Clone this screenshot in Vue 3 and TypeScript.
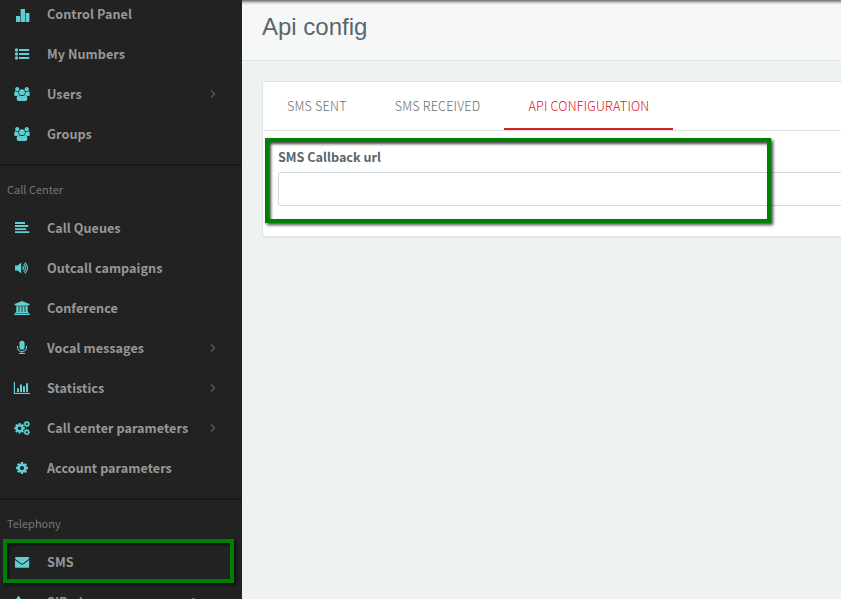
<script setup lang="ts">
interface NavItem {
  label: string
  icon: string
  sub?: boolean
  marked?: boolean
}
interface NavSection {
  title?: string
  items: NavItem[]
}

const sections: NavSection[] = [
  {
    items: [
      { label: 'Control Panel', icon: 'bars' },
      { label: 'My Numbers', icon: 'list' },
      { label: 'Users', icon: 'group', sub: true },
      { label: 'Groups', icon: 'group' },
    ],
  },
  {
    title: 'Call Center',
    items: [
      { label: 'Call Queues', icon: 'align' },
      { label: 'Outcall campaigns', icon: 'volume' },
      { label: 'Conference', icon: 'bank' },
      { label: 'Vocal messages', icon: 'mic', sub: true },
      { label: 'Statistics', icon: 'chart', sub: true },
      { label: 'Call center parameters', icon: 'cogs', sub: true },
      { label: 'Account parameters', icon: 'cog' },
    ],
  },
  {
    title: 'Telephony',
    items: [
      { label: 'SMS', icon: 'mail', marked: true },
      { label: 'SIP phone management', icon: 'phone' },
    ],
  },
]

const tabs = ['SMS SENT', 'SMS RECEIVED', 'API CONFIGURATION']
const activeTab = 2

const cog =
  'M1152 896q0-106-75-181t-181-75-181 75-75 181 75 181 181 75 181-75 75-181zm512-109v222q0 12-8 23t-20 13l-185 28q-19 54-39 91 35 50 107 138 10 12 10 25t-9 23q-27 37-99 108t-94 71q-12 0-26-9l-138-108q-44 23-91 38-16 136-29 186-7 28-36 28h-222q-14 0-24.5-8.5t-11.5-21.5l-28-184q-49-16-90-37l-141 107q-10 9-25 9-14 0-25-11-126-114-165-168-7-10-7-23 0-12 8-23 15-21 51-66.5t54-70.5q-27-50-41-99l-183-27q-13-2-21-12.5t-8-23.5v-222q0-12 8-23t19-13l186-28q14-46 39-92-40-57-107-138-10-12-10-24 0-10 9-23 26-36 98.5-107.5t94.5-71.5q13 0 26 10l138 107q44-23 91-38 16-136 29-186 7-28 36-28h222q14 0 24.5 8.5t11.5 21.5l28 184q49 16 90 37l142-107q9-9 24-9 13 0 25 10 129 119 165 170 7 8 7 22 0 12-8 23-15 21-51 66.5t-54 70.5q26 50 41 98l183 28q13 2 21 12.5t8 23.5z'
</script>

<template>
  <div class="app">
    <nav class="sidebar">
      <section v-for="(section, s) in sections" :key="s" class="section">
        <h2 v-if="section.title" class="section-title">{{ section.title }}</h2>
        <a v-for="item in section.items" :key="item.label" class="item" :class="{ marked: item.marked }">
          <svg class="icon" width="18" height="16" viewBox="0 0 18 16">
            <path v-if="item.icon === 'bars'" d="M3 10h4v6H3zM7.600 3H12v13H7.600zM12.600 7h3.800v9h-3.800z" />
            <template v-else-if="item.icon === 'list'">
              <path d="M6 3h10.200v2H6zM6 7h10.200v2H6zM6 11h10.200v2H6z" />
              <circle cx="3.500" cy="4" r="1.700" /><circle cx="3.500" cy="8" r="1.700" /><circle cx="3.500" cy="12" r="1.700" />
            </template>
            <template v-else-if="item.icon === 'group'">
              <circle cx="4.200" cy="3.200" r="2.100" /><circle cx="13.800" cy="3.200" r="2.100" />
              <path d="M1.200 8.200c0-2 .5-3 1.200-3 1 .7 2.200.8 3 .5 0 1.500.4 2.500 1.200 3.300-1.100 0-2 .3-2.700 1H2.700C1.700 10 1.200 9.300 1.200 8.200zM16.800 8.200c0-2-.5-3-1.200-3-1 .7-2.200.8-3 .5 0 1.500-.4 2.500-1.200 3.300 1.100 0 2 .3 2.700 1h1.200c1 0 1.500-.7 1.500-1.800z" />
              <circle cx="9" cy="6.200" r="2.900" />
              <path d="M3.700 12.800c0-2.500.9-3.700 2.300-3.700.8.600 1.800 1 3 1s2.200-.4 3-1c1.400 0 2.300 1.200 2.300 3.700 0 1.400-.9 2.300-2.200 2.300H5.900c-1.300 0-2.200-.9-2.200-2.300z" />
            </template>
            <path v-else-if="item.icon === 'align'" d="M2 2h10v2H2zM2 5h13.200v2H2zM2 8.200h11.200V10H2zM2 11.200h14.200V13H2z" />
            <template v-else-if="item.icon === 'volume'">
              <path d="M2 5.500h2.700L8.200 2.500v11L4.700 10.500H2z" />
              <path class="stroke" d="M9.700 6.200q1.700 1.800 0 3.600M10.700 4.200q3.600 3.800 0 7.600M11.700 2.500q5.600 5.500 0 11" />
            </template>
            <path v-else-if="item.icon === 'bank'" d="M9 1l7.500 3v1H15.500v.8h-13V5H1.500V4zM3.300 6.300h2.300V12h.8V6.300h2.200V12h.8V6.300h2.200V12h.8V6.300h2.300V12h.8v1h-13v-1h.8zM1.200 13.500h15.600V15H1.200z" />
            <template v-else-if="item.icon === 'mic'">
              <rect x="6.400" y=".7" width="5.200" height="9" rx="2.500" />
              <path class="stroke" d="M4.500 6v1.500a4.500 4 0 0 0 9 0V6M9 11.500v2M6 13.500h6" />
            </template>
            <path v-else-if="item.icon === 'chart'" d="M.8 2H2v11h15v1.100H.8zM4 8.300h2v3.900H4zM7 4.500h2v7.700H7zM10 6.300h2v5.900h-2zM13 3.300h2v8.900h-2z" />
            <template v-else-if="item.icon === 'cogs'">
              <path transform="translate(.38 2.100) scale(.0069)" :d="cog" />
              <path transform="translate(10.100 .4) scale(.0041)" :d="cog" />
              <path transform="translate(10.100 8.500) scale(.0041)" :d="cog" />
            </template>
            <path v-else-if="item.icon === 'cog'" transform="translate(2 1) scale(.0078125)" :d="cog" />
            <path v-else-if="item.icon === 'mail'" d="M2 4q0-1 1-1h12.200q1 0 1 1v.5q-.3.600-1 1.100L9.900 9.400q-.8.600-1.600 0L3 5.600Q2 5 2 4zM2 6l5.500 4.100q1.600 1.100 3.200 0L16.200 6v6.700q0 1-1 1H3q-1 0-1-1z" />
            <path v-else d="M5.500 2c.8 0 1.200 1.500 2.500 3v10H3V5c1.300-1.500 1.700-3 2.500-3z" />
          </svg>
          <span class="label">{{ item.label }}</span>
          <svg v-if="item.sub" class="chevron" width="6" height="8" viewBox="0 0 6 8">
            <path d="M1 .5L4.600 4 1 7.500" />
          </svg>
        </a>
      </section>
    </nav>

    <main class="main">
      <header class="header"><h1>Api config</h1></header>
      <div class="card">
        <div class="tabs">
          <a v-for="(tab, i) in tabs" :key="tab" class="tab" :class="{ active: i === activeTab }">{{ tab }}</a>
        </div>
        <div class="form">
          <label for="callback">SMS Callback url</label>
          <input id="callback" type="text" />
          <div class="form-mark"></div>
        </div>
      </div>
    </main>
  </div>
</template>

<style>
body {
  margin: 0;
  overflow: hidden;
}
</style>

<style scoped>
.app {
  display: flex;
  width: 100vw;
  height: 100vh;
  overflow: hidden;
  background: #eef2f3;
  font-family: "Noto Sans CJK SC", "Noto Sans", sans-serif;
}
.sidebar {
  flex: 0 0 242px;
  height: 100vh;
  overflow: hidden;
  background: #222;
}
.section {
  padding-bottom: 10px;
}
.section:first-child {
  margin-top: -6px;
}
.section + .section {
  border-top: 2px solid #171717;
}
.section-title {
  margin: 0;
  height: 42px;
  padding-left: 7px;
  font-size: 11px;
  font-weight: 400;
  line-height: 46px;
  color: #777;
}
.item {
  position: relative;
  display: flex;
  align-items: center;
  height: 40px;
  padding: 0 26px 0 13px;
  color: #989898;
}
.marked::after {
  content: "";
  position: absolute;
  left: 3px;
  top: -3px;
  width: 223px;
  height: 36px;
  border: 4px solid #008000;
  box-shadow: 2px 2px 3px #0009, inset 2px 2px 3px #0009;
}
.icon {
  flex: none;
  fill: #5fcfd1;
}
.stroke {
  fill: none;
  stroke: #5fcfd1;
  stroke-width: 1.1;
}
.label {
  margin-left: 16px;
  font-size: 12.600px;
  font-weight: 700;
  letter-spacing: 0.05px;
  line-height: 20px;
  white-space: nowrap;
}
.chevron {
  margin-left: auto;
  fill: none;
  stroke: #888;
}
.main {
  flex: 1;
  min-width: 0;
}
.header {
  height: 60px;
  border-bottom: 1px solid #dde5e7;
  background: linear-gradient(#777 0, #858585 1px, #bbb 2px, #e8e9e9 4px, #f6f8f8 5px);
}
h1 {
  margin: 0;
  padding-left: 20px;
  font: 400 24px/54px "Liberation Sans", Arial, sans-serif;
  color: #58666e;
}
.card {
  width: 700px;
  height: 154px;
  margin: 20px 0 0 20px;
  border: 1px solid #dee5e7;
  border-radius: 2px;
  background: #fff;
  box-shadow: 0 1px 1px #0000000d;
}
.tabs {
  display: flex;
  height: 48px;
  border-bottom: 1px solid #dbe0e2;
}
.tab {
  box-sizing: border-box;
  height: 48px;
  padding: 0 24px;
  font-size: 12.600px;
  font-weight: 300;
  letter-spacing: 0.2px;
  line-height: 48px;
  white-space: nowrap;
  color: #6c6c6c;
}
.tab.active {
  border-bottom: 2px solid #da2128;
  color: #d9141c;
}
.form {
  position: relative;
  padding: 16px 15px 0;
}
.form label {
  display: block;
  height: 25px;
  font-size: 12.600px;
  font-weight: 700;
  line-height: 20px;
  color: #58666e;
}
.form input {
  display: block;
  box-sizing: border-box;
  width: 660px;
  height: 34px;
  padding: 6px 12px;
  border: 1px solid #cfdadd;
  border-radius: 2px;
  background: #fff;
}
.form-mark {
  position: absolute;
  left: 2px;
  top: 7px;
  width: 498px;
  height: 77px;
  border: 4px solid #008000;
  box-shadow: 2px 2px 3px #000b, inset 2px 2px 3px #000b;
}
</style>
